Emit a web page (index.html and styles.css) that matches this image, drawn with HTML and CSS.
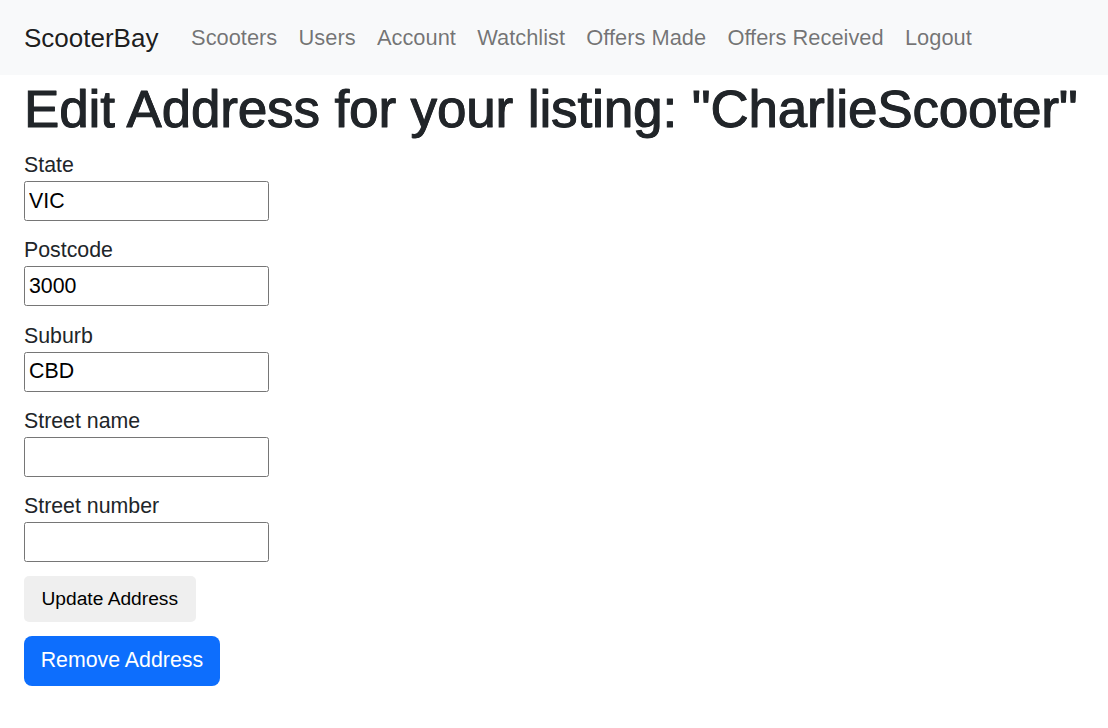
FILE: index.html
```html
<!DOCTYPE html>
<html lang="en">
<head>
<meta charset="utf-8">
<title>ScooterBay - Edit Address</title>
<link rel="stylesheet" href="styles.css">
</head>
<body>
<nav class="navbar">
  <a class="brand" href="#">ScooterBay</a>
  <ul class="nav">
    <li><a class="nav-link" href="#">Scooters</a></li>
    <li><a class="nav-link" href="#">Users</a></li>
    <li><a class="nav-link" href="#">Account</a></li>
    <li><a class="nav-link" href="#">Watchlist</a></li>
    <li><a class="nav-link" href="#">Offers Made</a></li>
    <li><a class="nav-link" href="#">Offers Received</a></li>
    <li><a class="nav-link" href="#">Logout</a></li>
  </ul>
</nav>
<main class="content">
  <h1 class="title">Edit Address for your listing: "CharlieScooter"</h1>
  <form class="form">
    <div class="field">
      <label class="label" for="state">State</label>
      <input class="input" id="state" type="text" value="VIC">
    </div>
    <div class="field">
      <label class="label" for="postcode">Postcode</label>
      <input class="input" id="postcode" type="text" value="3000">
    </div>
    <div class="field">
      <label class="label" for="suburb">Suburb</label>
      <input class="input" id="suburb" type="text" value="CBD">
    </div>
    <div class="field">
      <label class="label" for="street">Street name</label>
      <input class="input" id="street" type="text" value="">
    </div>
    <div class="field">
      <label class="label" for="number">Street number</label>
      <input class="input" id="number" type="text" value="">
    </div>
    <div class="actions">
      <button class="btn-update" type="button">Update Address</button>
      <button class="btn-remove" type="button">Remove Address</button>
    </div>
  </form>
</main>
</body>
</html>
```
FILE: styles.css
```css
* { box-sizing: border-box; }
html, body { margin: 0; padding: 0; }
body {
  font-family: "Liberation Sans", Arial, Helvetica, sans-serif;
  color: #212529;
  background: #ffffff;
  font-size: 21.33px;
  line-height: 32px;
}
.navbar {
  display: flex;
  align-items: center;
  height: 74.5px;
  padding: 0 24px;
  background: #f8f9fa;
}
.brand {
  font-size: 26px;
  line-height: 40px;
  margin-top: 2px;
  margin-right: 22px;
  color: rgba(0, 0, 0, 0.9);
  text-decoration: none;
}
.nav {
  display: flex;
  list-style: none;
  margin: 0;
  padding: 0;
}
.nav-link {
  display: block;
  margin-top: 1px;
  padding: 0 10.67px;
  font-size: 21.85px;
  line-height: 32px;
  color: rgba(0, 0, 0, 0.55);
  text-decoration: none;
}
.content {
  padding: 0 24px;
}
.title {
  margin: 2px 0 8.5px;
  font-size: 52.7px;
  line-height: 64px;
  font-weight: 500;
  color: #212529;
  -webkit-text-stroke: 1px #212529;
  text-shadow: 0.6px 0 0 #212529;
  white-space: nowrap;
}
.form { margin: 0; }
.field {
  margin-bottom: 13.33px;
}
.label {
  display: block;
  font-size: 21.33px;
  line-height: 32px;
  color: #212529;
}
.input {
  display: block;
  width: 245px;
  height: 40px;
  margin: 0;
  padding: 0 4px;
  border: 1px solid #767676;
  border-radius: 2.5px;
  font-family: "Liberation Sans", Arial, Helvetica, sans-serif;
  font-size: 21.33px;
  line-height: 32px;
  color: #000000;
  background: #ffffff;
}
.actions {
  display: flex;
  flex-direction: column;
  align-items: flex-start;
  gap: 14px;
}
.btn-update {
  height: 46px;
  padding: 0 17.5px;
  border: none;
  border-radius: 5px;
  background: #efefef;
  color: #000000;
  font-family: "Liberation Sans", Arial, Helvetica, sans-serif;
  font-size: 19.2px;
}
.btn-remove {
  height: 50px;
  padding: 0 16.7px;
  border: none;
  border-radius: 8px;
  background: #0d6efd;
  color: #ffffff;
  font-family: "Liberation Sans", Arial, Helvetica, sans-serif;
  font-size: 21.33px;
}
```
